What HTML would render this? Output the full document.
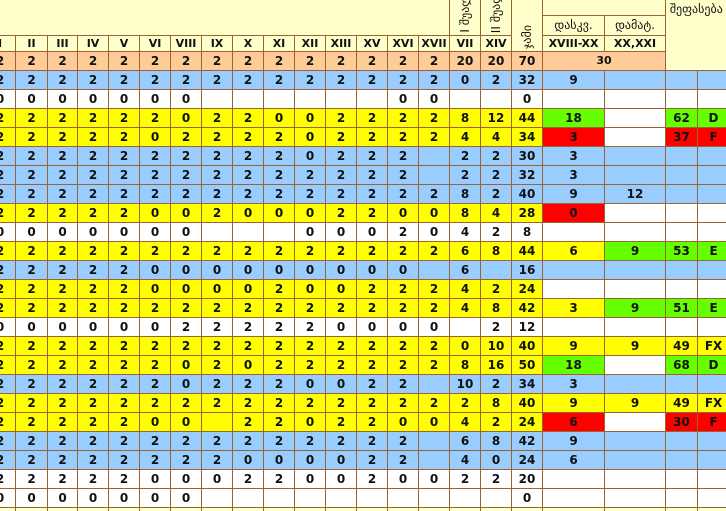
<!DOCTYPE html>
<html><head><meta charset="utf-8"><style>
html,body{margin:0;padding:0;background:#ffffcc;width:726px;height:511px;overflow:hidden;position:relative}
table{position:absolute;left:-16px;top:0;width:745px;border-collapse:collapse;table-layout:fixed;font:bold 12px "DejaVu Sans","Liberation Sans",sans-serif;color:#111}
td{border:1px solid #9c6232;padding:0;text-align:center;height:18px;line-height:18px;overflow:hidden;white-space:nowrap}
.b td{background:#99ccff}.y td{background:#ffff00}.w td{background:#fff}.s td{background:#ffcc99}
td.g{background:#66ff00}td.r{background:#ff0000}td.W{background:#fff}td.Y{background:#ffff00}
.h td{background:#ffffcc}
td.n{border-top:none;border-left:none;border-right:none}
.v{position:relative}
.v span{position:absolute;left:50%;bottom:2px;transform:translateX(-50%) rotate(180deg);writing-mode:vertical-rl;font-weight:normal;font-size:12px;line-height:14px;font-family:"DejaVu Sans",sans-serif}
.geo{font-weight:normal;font-family:"DejaVu Sans",sans-serif;font-size:12px}
.hc td{height:15px;line-height:15px;font-size:11px}
</style></head><body>
<table>
<colgroup><col style="width:31px"><col style="width:32px"><col style="width:30px"><col style="width:31px"><col style="width:31px"><col style="width:31px"><col style="width:31px"><col style="width:31px"><col style="width:31px"><col style="width:31px"><col style="width:31px"><col style="width:31px"><col style="width:31px"><col style="width:31px"><col style="width:31px"><col style="width:31px"><col style="width:31px"><col style="width:31px"><col style="width:62px"><col style="width:61px"><col style="width:32px"><col style="width:32px"></colgroup>
<tr class="h"><td colspan="15" rowspan="2" class="n" style="height:15px;line-height:15px"></td><td rowspan="2" class="v" style="height:15px;border-top:none"><span>I შუალედური</span></td><td rowspan="2" class="v" style="border-top:none"><span>II შუალედური</span></td><td rowspan="3" class="v" style="border-top:none"><span>ჯამი</span></td><td colspan="2" style="height:15px;line-height:15px;border-top:none"></td><td colspan="2" rowspan="4" style="vertical-align:top;text-align:left;border-top:none;border-right:none" class="geo">&nbsp;შეფასება</td></tr>
<tr class="h"><td class="geo" style="height:19px;line-height:19px;vertical-align:bottom">დასკვ.</td><td class="geo" style="height:19px;line-height:19px;vertical-align:bottom">დამატ.</td></tr>
<tr class="h hc"><td>I</td><td>II</td><td>III</td><td>IV</td><td>V</td><td>VI</td><td>VIII</td><td>IX</td><td>X</td><td>XI</td><td>XII</td><td>XIII</td><td>XV</td><td>XVI</td><td>XVII</td><td>VII</td><td>XIV</td><td>XVIII-XX</td><td>XX,XXI</td></tr>
<tr class="s"><td style="height:17px;line-height:17px">2</td><td>2</td><td>2</td><td>2</td><td>2</td><td>2</td><td>2</td><td>2</td><td>2</td><td>2</td><td>2</td><td>2</td><td>2</td><td>2</td><td>2</td><td>20</td><td>20</td><td>70</td><td colspan="2" style="font-size:11px">30</td></tr>
<tr class="b"><td>2</td><td>2</td><td>2</td><td>2</td><td>2</td><td>2</td><td>2</td><td>2</td><td>2</td><td>2</td><td>2</td><td>2</td><td>2</td><td>2</td><td>2</td><td>0</td><td>2</td><td>32</td><td>9</td><td></td><td></td><td></td></tr>
<tr class="w"><td>0</td><td>0</td><td>0</td><td>0</td><td>0</td><td>0</td><td>0</td><td></td><td></td><td></td><td></td><td></td><td></td><td>0</td><td>0</td><td></td><td></td><td>0</td><td></td><td></td><td></td><td></td></tr>
<tr class="y"><td>2</td><td>2</td><td>2</td><td>2</td><td>2</td><td>2</td><td>0</td><td>2</td><td>2</td><td>0</td><td>0</td><td>2</td><td>2</td><td>2</td><td>2</td><td>8</td><td>12</td><td>44</td><td class="g">18</td><td class="W"></td><td class="g">62</td><td class="g">D</td></tr>
<tr class="y"><td>2</td><td>2</td><td>2</td><td>2</td><td>2</td><td>0</td><td>2</td><td>2</td><td>2</td><td>2</td><td>0</td><td>2</td><td>2</td><td>2</td><td>2</td><td>4</td><td>4</td><td>34</td><td class="r">3</td><td class="W"></td><td class="r">37</td><td class="r">F</td></tr>
<tr class="b"><td>2</td><td>2</td><td>2</td><td>2</td><td>2</td><td>2</td><td>2</td><td>2</td><td>2</td><td>2</td><td>0</td><td>2</td><td>2</td><td>2</td><td></td><td>2</td><td>2</td><td>30</td><td>3</td><td></td><td></td><td></td></tr>
<tr class="b"><td>2</td><td>2</td><td>2</td><td>2</td><td>2</td><td>2</td><td>2</td><td>2</td><td>2</td><td>2</td><td>2</td><td>2</td><td>2</td><td>2</td><td></td><td>2</td><td>2</td><td>32</td><td>3</td><td></td><td></td><td></td></tr>
<tr class="b"><td>2</td><td>2</td><td>2</td><td>2</td><td>2</td><td>2</td><td>2</td><td>2</td><td>2</td><td>2</td><td>2</td><td>2</td><td>2</td><td>2</td><td>2</td><td>8</td><td>2</td><td>40</td><td>9</td><td>12</td><td></td><td></td></tr>
<tr class="y"><td>2</td><td>2</td><td>2</td><td>2</td><td>2</td><td>0</td><td>0</td><td>2</td><td>0</td><td>0</td><td>0</td><td>2</td><td>2</td><td>0</td><td>0</td><td>8</td><td>4</td><td>28</td><td class="r">0</td><td class="W"></td><td class="W"></td><td class="W"></td></tr>
<tr class="w"><td>0</td><td>0</td><td>0</td><td>0</td><td>0</td><td>0</td><td>0</td><td></td><td></td><td></td><td>0</td><td>0</td><td>0</td><td>2</td><td>0</td><td>4</td><td>2</td><td>8</td><td></td><td></td><td></td><td></td></tr>
<tr class="y"><td>2</td><td>2</td><td>2</td><td>2</td><td>2</td><td>2</td><td>2</td><td>2</td><td>2</td><td>2</td><td>2</td><td>2</td><td>2</td><td>2</td><td>2</td><td>6</td><td>8</td><td>44</td><td>6</td><td class="g">9</td><td class="g">53</td><td class="g">E</td></tr>
<tr class="b"><td>2</td><td>2</td><td>2</td><td>2</td><td>2</td><td>0</td><td>0</td><td>0</td><td>0</td><td>0</td><td>0</td><td>0</td><td>0</td><td>0</td><td></td><td>6</td><td></td><td>16</td><td></td><td></td><td></td><td></td></tr>
<tr class="y"><td>2</td><td>2</td><td>2</td><td>2</td><td>2</td><td>0</td><td>0</td><td>0</td><td>0</td><td>2</td><td>0</td><td>0</td><td>2</td><td>2</td><td>2</td><td>4</td><td>2</td><td>24</td><td class="W"></td><td class="W"></td><td class="W"></td><td class="W"></td></tr>
<tr class="y"><td>2</td><td>2</td><td>2</td><td>2</td><td>2</td><td>2</td><td>2</td><td>2</td><td>2</td><td>2</td><td>2</td><td>2</td><td>2</td><td>2</td><td>2</td><td>4</td><td>8</td><td>42</td><td>3</td><td class="g">9</td><td class="g">51</td><td class="g">E</td></tr>
<tr class="w"><td>0</td><td>0</td><td>0</td><td>0</td><td>0</td><td>0</td><td>2</td><td>2</td><td>2</td><td>2</td><td>2</td><td>0</td><td>0</td><td>0</td><td>0</td><td></td><td>2</td><td>12</td><td></td><td></td><td></td><td></td></tr>
<tr class="y"><td>2</td><td>2</td><td>2</td><td>2</td><td>2</td><td>2</td><td>2</td><td>2</td><td>2</td><td>2</td><td>2</td><td>2</td><td>2</td><td>2</td><td>2</td><td>0</td><td>10</td><td>40</td><td>9</td><td>9</td><td>49</td><td>FX</td></tr>
<tr class="y"><td>2</td><td>2</td><td>2</td><td>2</td><td>2</td><td>2</td><td>0</td><td>2</td><td>0</td><td>2</td><td>2</td><td>2</td><td>2</td><td>2</td><td>2</td><td>8</td><td>16</td><td>50</td><td class="g">18</td><td class="W"></td><td class="g">68</td><td class="g">D</td></tr>
<tr class="b"><td>2</td><td>2</td><td>2</td><td>2</td><td>2</td><td>2</td><td>0</td><td>2</td><td>2</td><td>2</td><td>0</td><td>0</td><td>2</td><td>2</td><td></td><td>10</td><td>2</td><td>34</td><td>3</td><td></td><td></td><td></td></tr>
<tr class="y"><td>2</td><td>2</td><td>2</td><td>2</td><td>2</td><td>2</td><td>2</td><td>2</td><td>2</td><td>2</td><td>2</td><td>2</td><td>2</td><td>2</td><td>2</td><td>2</td><td>8</td><td>40</td><td>9</td><td>9</td><td>49</td><td>FX</td></tr>
<tr class="y"><td>2</td><td>2</td><td>2</td><td>2</td><td>2</td><td>0</td><td>0</td><td></td><td>2</td><td>2</td><td>0</td><td>2</td><td>2</td><td>0</td><td>0</td><td>4</td><td>2</td><td>24</td><td class="r">6</td><td class="W"></td><td class="r">30</td><td class="r">F</td></tr>
<tr class="b"><td>2</td><td>2</td><td>2</td><td>2</td><td>2</td><td>2</td><td>2</td><td>2</td><td>2</td><td>2</td><td>2</td><td>2</td><td>2</td><td>2</td><td></td><td>6</td><td>8</td><td>42</td><td>9</td><td></td><td></td><td></td></tr>
<tr class="b"><td>2</td><td>2</td><td>2</td><td>2</td><td>2</td><td>2</td><td>2</td><td>2</td><td>0</td><td>0</td><td>0</td><td>0</td><td>2</td><td>2</td><td></td><td>4</td><td>0</td><td>24</td><td>6</td><td></td><td></td><td></td></tr>
<tr class="w"><td>2</td><td>2</td><td>2</td><td>2</td><td>2</td><td>0</td><td>0</td><td>0</td><td>2</td><td>2</td><td>0</td><td>0</td><td>2</td><td>0</td><td>0</td><td>2</td><td>2</td><td>20</td><td></td><td></td><td></td><td></td></tr>
<tr class="w"><td>0</td><td>0</td><td>0</td><td>0</td><td>0</td><td>0</td><td>0</td><td></td><td></td><td></td><td></td><td></td><td></td><td></td><td></td><td></td><td></td><td>0</td><td></td><td></td><td></td><td></td></tr>
<tr class="h"><td></td><td></td><td></td><td></td><td></td><td></td><td></td><td></td><td></td><td></td><td></td><td></td><td></td><td></td><td></td><td></td><td></td><td></td><td></td><td></td><td></td><td></td></tr>
</table>
</body></html>
